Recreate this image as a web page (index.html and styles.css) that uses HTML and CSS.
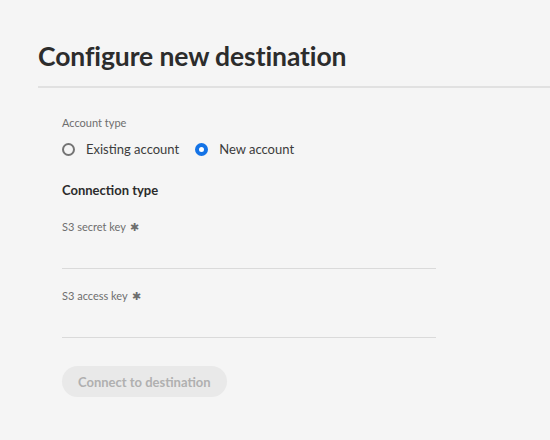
FILE: index.html
```html
<!DOCTYPE html>
<html>
<head>
<meta charset="utf-8">
<link rel="stylesheet" href="styles.css">
</head>
<body>
<div class="page">
  <h1 class="title">Configure new destination</h1>
  <div class="divider"></div>
  <div class="form">
    <div class="label">Account type</div>
    <div class="radios">
      <label class="radio"><span class="dot"></span>Existing account</label>
      <label class="radio"><span class="dot checked"></span>New account</label>
    </div>
    <div class="section">Connection type</div>
    <div class="field">
      <div class="label">S3 secret key <span class="req">✱</span></div>
      <div class="input"></div>
    </div>
    <div class="field">
      <div class="label">S3 access key <span class="req">✱</span></div>
      <div class="input"></div>
    </div>
    <button class="btn">Connect to destination</button>
  </div>
</div>
</body>
</html>
```
FILE: styles.css
```css
html, body {
  margin: 0;
  padding: 0;
  background: #f5f5f5;
  font-family: Lato, "Liberation Sans", sans-serif;
  color: #2c2c2c;
}
.page {
  width: 550px;
  height: 440px;
  padding-top: 38px;
  box-sizing: border-box;
}
.title {
  margin: 0 0 0 38px;
  font-size: 26.5px;
  font-weight: 700;
  line-height: 36px;
  letter-spacing: -0.1px;
  color: #2c2c2c;
}
.divider {
  margin: 12px 0 0 38px;
  height: 2px;
  background: #e1e1e1;
}
.form {
  padding: 27px 0 0 62px;
}
.label {
  font-size: 11px;
  line-height: 16px;
  color: #6e6e6e;
}
.req {
  font-size: 11px;
  margin-left: 2px;
  color: #6e6e6e;
}
.radios {
  display: flex;
  gap: 16px;
  margin-top: 5px;
  height: 26px;
  align-items: center;
}
.radio {
  display: flex;
  align-items: center;
  font-size: 13px;
  color: #3c3c3c;
}
.dot {
  width: 9px;
  height: 9px;
  border: 2px solid #747474;
  border-radius: 50%;
  margin-right: 11px;
  background: #f5f5f5;
}
.dot.checked {
  border: 4px solid #1473e6;
  width: 5px;
  height: 5px;
  background: #fff;
}
.section {
  margin-top: 19px;
  font-size: 13px;
  font-weight: 700;
  color: #2c2c2c;
  line-height: 18px;
}
.field {
  margin-top: 20px;
  width: 374px;
}
.field + .field {
  margin-top: 19px;
}
.input {
  height: 33px;
  border-bottom: 1px solid #dadada;
}
.btn {
  margin-top: 28px;
  height: 31px;
  padding: 0 16px;
  border: none;
  border-radius: 16px;
  background: #e9e9e9;
  color: #b0b0b0;
  font-family: inherit;
  font-weight: 700;
  font-size: 13px;
}
```
